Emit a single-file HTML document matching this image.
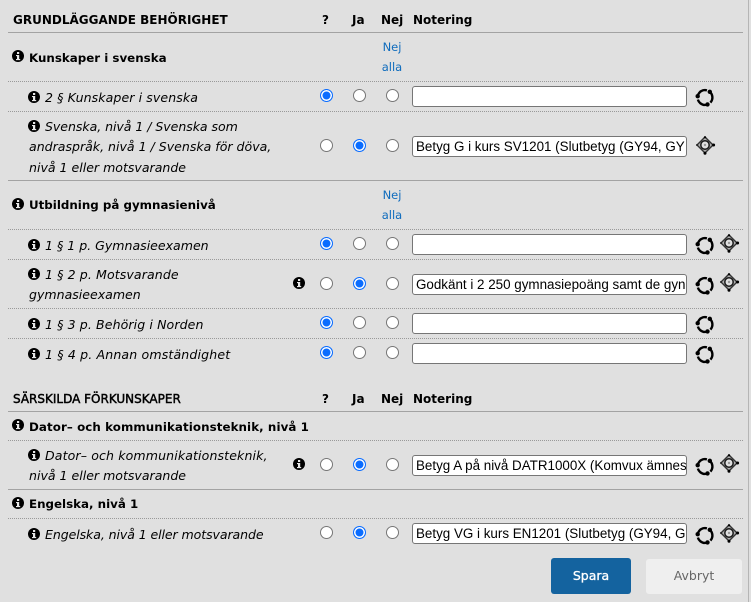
<!DOCTYPE html>
<html lang="sv"><head><meta charset="utf-8"><title>Behörighet</title>
<style>
html,body{margin:0;padding:0}
body{width:751px;height:602px;background:#e0e0e0;position:relative;overflow:hidden;font-family:"DejaVu Sans","Liberation Sans",sans-serif;font-size:12px;color:#000}
.a{position:absolute;white-space:nowrap}
.h{font-weight:bold;font-size:12px;line-height:16px}
.g{font-weight:bold;font-size:11.85px;line-height:16px}
.i{font-style:italic;font-size:12.55px;line-height:21px}
.l{position:absolute;left:8px;width:735px;height:0}
.s{border-top:1px solid #a3a3a3}
.d{border-top:1px dotted #999}
.r{position:absolute;width:11px;height:11px;border:1px solid #767676;border-radius:50%;background:#fff;box-sizing:content-box}
.c{border:1px solid #0a6cff;background:#0a6cff;box-shadow:inset 0 0 0 1.5px #fff}
.t{position:absolute;left:412px;width:275px;height:21px;box-sizing:border-box;background:#fff;border:1px solid #767676;border-radius:3px;font:13.4px/19px "Liberation Sans",sans-serif;padding-left:3px;overflow:hidden;white-space:nowrap}
.n{position:absolute;left:380px;width:24px;text-align:center;color:#0f6cbd;font-size:11.5px;line-height:20px}
svg{position:absolute;overflow:visible}
.b{position:absolute;box-sizing:border-box;text-align:center;font-size:12.5px;border-radius:3px}
</style></head><body>
<svg width="0" height="0" style="left:0;top:0"><defs>
<g id="inf"><circle cx="6" cy="6" r="6" fill="#000"/><rect x="5" y="2" width="2.2" height="2" fill="#e8e8e8"/><path d="M4 5h3.2v4h1v1.1H4V9h1V6.1H4z" fill="#e8e8e8"/></g>
<g id="rot"><circle cx="9" cy="9.5" r="7.4" fill="none" stroke="#000" stroke-width="2.4" stroke-dasharray="12 3.5" transform="rotate(-50 9 9.5)"/><circle cx="13.8" cy="3.8" r="2.2" fill="#000"/><circle cx="11.5" cy="16.4" r="2.2" fill="#000"/><circle cx="1.7" cy="8.2" r="2.2" fill="#000"/></g>
<g id="dia"><path d="M9 1L17 9L9 17L1 9Z" fill="#b0b0b0" stroke="#333" stroke-width="1.4" stroke-linejoin="round"/><circle cx="9" cy="9" r="4.2" fill="#e0e0e0" stroke="#1a1a1a" stroke-width="1.5"/><circle cx="9" cy="9" r="1.2" fill="#999"/><circle cx="9" cy="1.2" r="1.1" fill="#000"/><circle cx="9" cy="17.2" r="1.5" fill="#000"/><circle cx="17.6" cy="9" r="1.5" fill="#000"/><circle cx="1" cy="9" r="1" fill="#222"/></g>
</defs></svg>

<div style="position:absolute;left:748px;top:0;width:1px;height:602px;background:#b5b5b5"></div>

<div class="a h" style="left:13px;top:12px">GRUNDLÄGGANDE BEHÖRIGHET</div>
<div class="a h" style="left:322px;top:12px">?</div>
<div class="a h" style="left:352px;top:12px">Ja</div>
<div class="a h" style="left:381px;top:12px">Nej</div>
<div class="a h" style="left:413px;top:12px">Notering</div>
<div class="l s" style="top:32px"></div>

<svg style="left:12px;top:50px" width="12" height="12"><use href="#inf"/></svg>
<div class="a g" style="left:29px;top:50px">Kunskaper i svenska</div>
<div class="n" style="top:37px">Nej</div><div class="n" style="top:57px">alla</div>
<div class="l d" style="top:81px"></div>

<svg style="left:28px;top:91px" width="12" height="12"><use href="#inf"/></svg>
<div class="a i" style="left:45px;top:87px;letter-spacing:.09px">2 § Kunskaper i svenska</div>
<div class="r c" style="left:320px;top:89px"></div><div class="r" style="left:353px;top:89px"></div><div class="r" style="left:386px;top:89px"></div>
<div class="t" style="top:86px"></div>
<svg style="left:696px;top:88px" width="18" height="18"><use href="#rot"/></svg>
<div class="l d" style="top:111px"></div>

<svg style="left:28px;top:120px" width="12" height="12"><use href="#inf"/></svg>
<div class="a i" style="left:45px;top:116px;letter-spacing:-.05px">Svenska, nivå 1 / Svenska som</div>
<div class="a i" style="left:29px;top:136px">andraspråk, nivå 1 / Svenska för döva,</div>
<div class="a i" style="left:29px;top:157px">nivå 1 eller motsvarande</div>
<div class="r" style="left:320px;top:139px"></div><div class="r c" style="left:353px;top:139px"></div><div class="r" style="left:386px;top:139px"></div>
<div class="t" style="top:136px">Betyg G i kurs SV1201 (Slutbetyg (GY94, GY</div>
<svg style="left:696px;top:136px" width="18" height="18"><use href="#dia"/></svg>
<div class="l s" style="top:180px"></div>

<svg style="left:12px;top:198px" width="12" height="12"><use href="#inf"/></svg>
<div class="a g" style="left:29px;top:197px">Utbildning på gymnasienivå</div>
<div class="n" style="top:185px">Nej</div><div class="n" style="top:205px">alla</div>
<div class="l d" style="top:229px"></div>

<svg style="left:28px;top:239px" width="12" height="12"><use href="#inf"/></svg>
<div class="a i" style="left:45px;top:235px">1 § 1 p. Gymnasieexamen</div>
<div class="r c" style="left:320px;top:237px"></div><div class="r" style="left:353px;top:237px"></div><div class="r" style="left:386px;top:237px"></div>
<div class="t" style="top:234px"></div>
<svg style="left:696px;top:236px" width="18" height="18"><use href="#rot"/></svg>
<svg style="left:720px;top:234px" width="18" height="18"><use href="#dia"/></svg>
<div class="l d" style="top:259px"></div>

<svg style="left:28px;top:268px" width="12" height="12"><use href="#inf"/></svg>
<div class="a i" style="left:45px;top:264px;letter-spacing:.1px">1 § 2 p. Motsvarande</div>
<div class="a i" style="left:29px;top:284px">gymnasieexamen</div>
<svg style="left:293px;top:277px" width="12" height="12"><use href="#inf"/></svg>
<div class="r" style="left:320px;top:277px"></div><div class="r c" style="left:353px;top:277px"></div><div class="r" style="left:386px;top:277px"></div>
<div class="t" style="top:274px">Godkänt i 2 250 gymnasiepoäng samt de gyn</div>
<svg style="left:696px;top:276px" width="18" height="18"><use href="#rot"/></svg>
<svg style="left:720px;top:273px" width="18" height="18"><use href="#dia"/></svg>
<div class="l d" style="top:308px"></div>

<svg style="left:28px;top:318px" width="12" height="12"><use href="#inf"/></svg>
<div class="a i" style="left:45px;top:314px;letter-spacing:.1px">1 § 3 p. Behörig i Norden</div>
<div class="r c" style="left:320px;top:316px"></div><div class="r" style="left:353px;top:316px"></div><div class="r" style="left:386px;top:316px"></div>
<div class="t" style="top:313px"></div>
<svg style="left:696px;top:315px" width="18" height="18"><use href="#rot"/></svg>
<div class="l d" style="top:338px"></div>

<svg style="left:28px;top:348px" width="12" height="12"><use href="#inf"/></svg>
<div class="a i" style="left:45px;top:344px;letter-spacing:.15px">1 § 4 p. Annan omständighet</div>
<div class="r c" style="left:320px;top:346px"></div><div class="r" style="left:353px;top:346px"></div><div class="r" style="left:386px;top:346px"></div>
<div class="t" style="top:343px"></div>
<svg style="left:696px;top:345px" width="18" height="18"><use href="#rot"/></svg>

<div class="a h" style="left:13px;top:391px;font-weight:normal;-webkit-text-stroke:.45px #000">SÄRSKILDA FÖRKUNSKAPER</div>
<div class="a h" style="left:322px;top:391px">?</div>
<div class="a h" style="left:352px;top:391px">Ja</div>
<div class="a h" style="left:381px;top:391px">Nej</div>
<div class="a h" style="left:413px;top:391px">Notering</div>
<div class="l s" style="top:411px"></div>

<svg style="left:12px;top:419px" width="12" height="12"><use href="#inf"/></svg>
<div class="a g" style="left:29px;top:419px;letter-spacing:.08px">Dator– och kommunikationsteknik, nivå 1</div>
<div class="l d" style="top:440px"></div>

<svg style="left:28px;top:449px" width="12" height="12"><use href="#inf"/></svg>
<div class="a i" style="left:45px;top:445px;letter-spacing:.12px">Dator– och kommunikationsteknik,</div>
<div class="a i" style="left:29px;top:465px">nivå 1 eller motsvarande</div>
<svg style="left:293px;top:458px" width="12" height="12"><use href="#inf"/></svg>
<div class="r" style="left:320px;top:458px"></div><div class="r c" style="left:353px;top:458px"></div><div class="r" style="left:386px;top:458px"></div>
<div class="t" style="top:455px">Betyg A på nivå DATR1000X (Komvux ämnes</div>
<svg style="left:696px;top:457px" width="18" height="18"><use href="#rot"/></svg>
<svg style="left:720px;top:454px" width="18" height="18"><use href="#dia"/></svg>
<div class="l s" style="top:489px"></div>

<svg style="left:12px;top:497px" width="12" height="12"><use href="#inf"/></svg>
<div class="a g" style="left:29px;top:496px">Engelska, nivå 1</div>
<div class="l d" style="top:518px"></div>

<svg style="left:28px;top:528px" width="12" height="12"><use href="#inf"/></svg>
<div class="a i" style="left:45px;top:524px;letter-spacing:-.09px">Engelska, nivå 1 eller motsvarande</div>
<div class="r" style="left:320px;top:526px"></div><div class="r c" style="left:353px;top:526px"></div><div class="r" style="left:386px;top:526px"></div>
<div class="t" style="top:523px">Betyg VG i kurs EN1201 (Slutbetyg (GY94, G</div>
<svg style="left:696px;top:526px" width="18" height="18"><use href="#rot"/></svg>
<svg style="left:720px;top:524px" width="18" height="18"><use href="#dia"/></svg>

<div class="b" style="left:551px;top:558px;width:80px;height:36px;background:#14639f;color:#fff;line-height:35px;-webkit-text-stroke:.3px #fff">Spara</div>
<div class="b" style="left:646px;top:559px;width:96px;height:35px;background:#efefef;color:#666;line-height:33px">Avbryt</div>
</body></html>
